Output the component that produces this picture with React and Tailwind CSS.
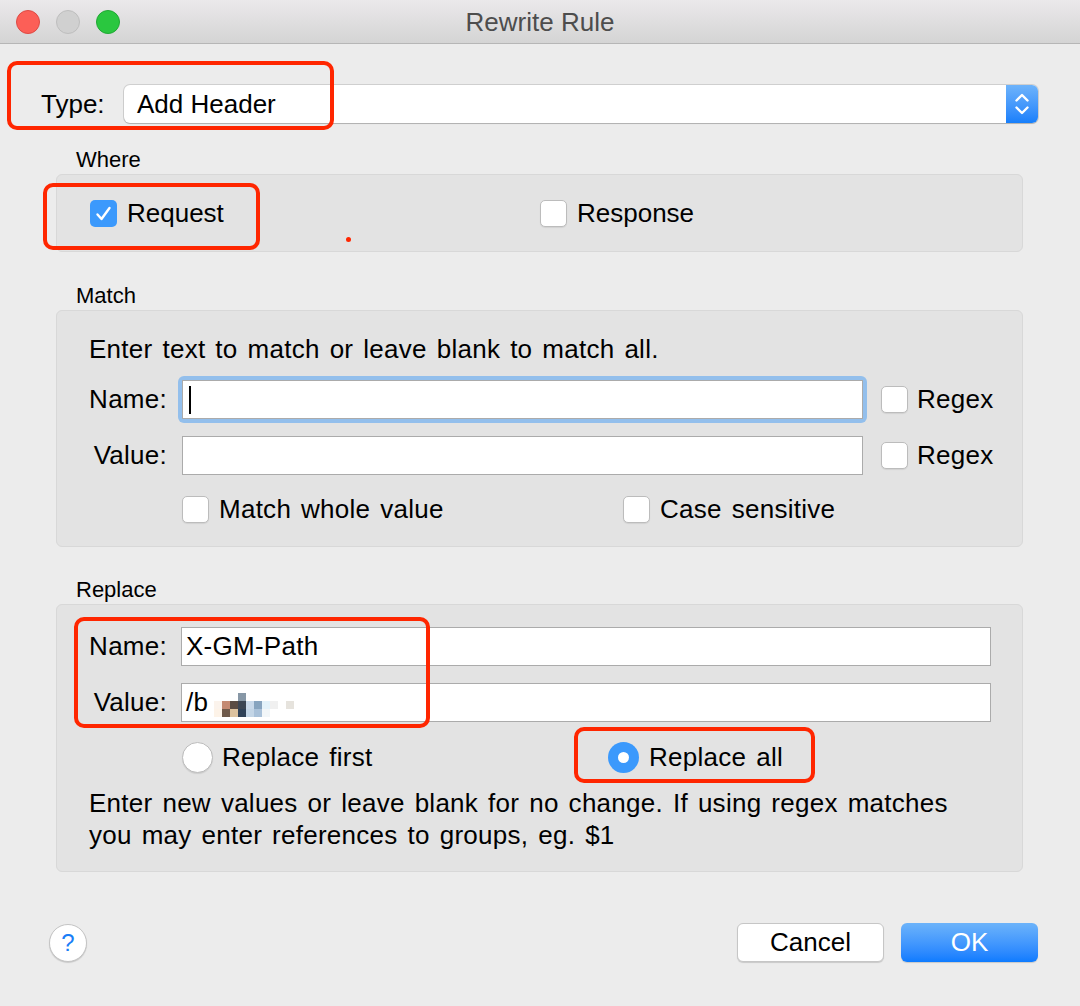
const FONT = "font-['Liberation_Sans',Arial,sans-serif]"

function Checkbox({ checked }) {
  if (checked) {
    return (
      <div className="w-[27px] h-[27px] rounded-[5px] bg-[#3b99fc] flex items-center justify-center flex-shrink-0">
        <svg width="27" height="27" viewBox="0 0 27 27" fill="none">
          <path d="M7.5 14.5l4 4.5 8-11" stroke="#fff" strokeWidth="2.4" strokeLinecap="round" strokeLinejoin="round" />
        </svg>
      </div>
    )
  }
  return (
    <div className="w-[27px] h-[27px] rounded-[5px] bg-white border border-[#bcbcbc] shadow-[0_1px_1px_rgba(0,0,0,0.08)] flex-shrink-0" />
  )
}

function Radio({ checked }) {
  if (checked) {
    return (
      <div className="w-[31px] h-[31px] rounded-full bg-[#3b99fc] flex items-center justify-center flex-shrink-0">
        <div className="w-[11px] h-[11px] rounded-full bg-white" />
      </div>
    )
  }
  return (
    <div className="w-[31px] h-[31px] rounded-full bg-white border border-[#bcbcbc] shadow-[0_1px_1px_rgba(0,0,0,0.1)] flex-shrink-0" />
  )
}

function Label({ children }) {
  return <div className="w-[78px] text-right whitespace-nowrap flex-shrink-0">{children}</div>
}

function TextInput({ width, children, focused }) {
  const box = (
    <div
      className="h-[39px] bg-white border border-[#ababab] flex items-center pl-[4px] whitespace-nowrap overflow-hidden"
      style={{ width }}
    >
      {children}
    </div>
  )
  if (!focused) return box
  return (
    <div className="rounded-[6px] p-[4px] bg-[#93bfec] -m-[4px]">{box}</div>
  )
}

const PIX = [
  [null, null, null, '#8797a6', null, null, null, null, null, null],
  ['#fbf3ec', '#c48a72', '#5a4c44', '#3c4654', '#c9d9ea', '#87a4bf', '#e3f2fa', '#f0f0f0', null, '#e6e3dd'],
  ['#fdf3e8', '#6f5a4a', '#dcc29f', '#2f4157', '#c3d5e6', '#a9c1d9', '#f2f6f8', null, null, null],
]

function Pixelated() {
  return (
    <div className="flex flex-col ml-[6px] mt-[4px]">
      {PIX.map((row, i) => (
        <div key={i} className="flex">
          {row.map((c, j) => (
            <div key={j} className="w-[8px] h-[8px]" style={{ background: c || 'transparent' }} />
          ))}
        </div>
      ))}
    </div>
  )
}

function GroupTitle({ children, className = '' }) {
  return <div className={`ml-[76px] h-[26px] leading-[26px] text-[22px] text-black ${className}`}>{children}</div>
}

export default function App() {
  return (
    <div className={`relative w-[1080px] h-[1006px] bg-[#ececec] overflow-hidden text-[26px] text-black ${FONT}`}>
      {/* Title bar */}
      <div className="relative h-[44px] border-b border-[#b6b6b6] bg-gradient-to-b from-[#ebe9eb] to-[#d4d4d4] flex items-center">
        <div className="flex gap-[16px] ml-[16px]">
          <div className="w-[24px] h-[24px] rounded-full bg-[#fc5f57] border border-[#de4a44]" />
          <div className="w-[24px] h-[24px] rounded-full bg-[#d0d0d0] border border-[#bebebe]" />
          <div className="w-[24px] h-[24px] rounded-full bg-[#2ac73f] border border-[#20a834]" />
        </div>
        <div className="absolute inset-0 flex items-center justify-center pt-[2px] text-[26px] text-[#4d4d4d]">Rewrite Rule</div>
      </div>

      {/* Type row */}
      <div className="flex items-center mt-[41px] ml-[41px] h-[38px]">
        <div className="w-[83px]">Type:</div>
        <div className="flex w-[914px] h-[38px] rounded-[6px] bg-white shadow-[0_0_0_1px_rgba(0,0,0,0.12),0_1px_1px_rgba(0,0,0,0.15)] overflow-hidden">
          <div className="flex-1 flex items-center pl-[13px]">Add Header</div>
          <div className="w-[32px] bg-gradient-to-b from-[#6db3fb] to-[#167ffb] flex items-center justify-center">
            <svg width="20" height="28" viewBox="0 0 20 28" fill="none">
              <path d="M4.5 10.5L10 5l5.5 5.5M4.5 17.5L10 23l5.5-5.5" stroke="#fff" strokeWidth="2.4" strokeLinecap="round" strokeLinejoin="round" />
            </svg>
          </div>
        </div>
      </div>

      {/* Where */}
      <GroupTitle className="mt-[24px]">Where</GroupTitle>
      <div className="mt-[1px] ml-[56px] w-[967px] h-[78px] rounded-[6px] bg-[#e3e3e3] border border-[#d8d8d8] flex items-center pl-[33px]">
        <div className="w-[450px] flex items-center gap-[10px]">
          <Checkbox checked />
          <span>Request</span>
        </div>
        <div className="flex items-center gap-[10px]">
          <Checkbox />
          <span>Response</span>
        </div>
      </div>

      {/* Match */}
      <GroupTitle className="mt-[31px]">Match</GroupTitle>
      <div className="mt-[1px] ml-[56px] w-[967px] h-[237px] rounded-[6px] bg-[#e3e3e3] border border-[#d8d8d8] pl-[32px] pt-[23px] tracking-[0.01em] [word-spacing:2.5px]">
        <div className="h-[30px] leading-[30px]">Enter text to match or leave blank to match all.</div>
        <div className="flex items-center mt-[16px]">
          <Label>Name:</Label>
          <div className="ml-[15px]">
            <TextInput width={681} focused>
              <div className="w-[2px] h-[28px] bg-black ml-[2px]" />
            </TextInput>
          </div>
          <div className="ml-[18px] flex items-center gap-[9px]">
            <Checkbox />
            <span>Regex</span>
          </div>
        </div>
        <div className="flex items-center mt-[17px]">
          <Label>Value:</Label>
          <div className="ml-[15px]">
            <TextInput width={681} />
          </div>
          <div className="ml-[18px] flex items-center gap-[9px]">
            <Checkbox />
            <span>Regex</span>
          </div>
        </div>
        <div className="flex items-center mt-[15px] ml-[93px]">
          <div className="w-[441px] flex items-center gap-[10px]">
            <Checkbox />
            <span>Match whole value</span>
          </div>
          <div className="flex items-center gap-[10px]">
            <Checkbox />
            <span>Case sensitive</span>
          </div>
        </div>
      </div>

      {/* Replace */}
      <GroupTitle className="mt-[30px]">Replace</GroupTitle>
      <div className="mt-[1px] ml-[56px] w-[967px] h-[268px] rounded-[6px] bg-[#e3e3e3] border border-[#d8d8d8] pl-[32px] pt-[22px] tracking-[0.01em] [word-spacing:2.5px]">
        <div className="flex items-center">
          <Label>Name:</Label>
          <div className="ml-[14px]">
            <TextInput width={810}>X-GM-Path</TextInput>
          </div>
        </div>
        <div className="flex items-center mt-[17px]">
          <Label>Value:</Label>
          <div className="ml-[14px]">
            <TextInput width={810}>
              <span>/b</span>
              <Pixelated />
            </TextInput>
          </div>
        </div>
        <div className="flex items-center h-[32px] mt-[19px] ml-[93px]">
          <div className="w-[426px] flex items-center gap-[9px]">
            <Radio />
            <span>Replace first</span>
          </div>
          <div className="flex items-center gap-[10px]">
            <Radio checked />
            <span>Replace all</span>
          </div>
        </div>
        <div className="mt-[14px] leading-[32px] whitespace-nowrap">
          <div>Enter new values or leave blank for no change. If using regex matches</div>
          <div>you may enter references to groups, eg. $1</div>
        </div>
      </div>

      {/* Buttons */}
      <div className="flex items-center mt-[51px] h-[39px]">
        <div className="ml-[49px] w-[38px] h-[38px] rounded-full bg-white border border-[#c4c4c4] shadow-[0_1px_1px_rgba(0,0,0,0.15)] flex items-center justify-center text-[24px] text-[#1a7ef7]">?</div>
        <div className="ml-auto flex gap-[17px] mr-[42px]">
          <div className="w-[147px] h-[39px] rounded-[6px] bg-white border border-[#c6c6c6] shadow-[0_1px_1px_rgba(0,0,0,0.15)] flex items-center justify-center">Cancel</div>
          <div className="w-[137px] h-[39px] rounded-[6px] bg-gradient-to-b from-[#6cb3fa] to-[#0c7bff] shadow-[0_1px_1px_rgba(0,0,0,0.15)] flex items-center justify-center text-white">OK</div>
        </div>
      </div>

      {/* Red annotations */}
      <div className="absolute left-[7px] top-[61px] w-[327px] h-[69px] border-4 border-[#ff2600] rounded-[10px]" />
      <div className="absolute left-[43px] top-[183px] w-[217px] h-[67px] border-4 border-[#ff2600] rounded-[10px]" />
      <div className="absolute left-[74px] top-[617px] w-[356px] h-[111px] border-4 border-[#ff2600] rounded-[10px]" />
      <div className="absolute left-[574px] top-[727px] w-[241px] h-[56px] border-4 border-[#ff2600] rounded-[10px]" />
      <div className="absolute left-[346px] top-[237px] w-[5px] h-[5px] rounded-full bg-[#ff2600]" />
    </div>
  )
}
